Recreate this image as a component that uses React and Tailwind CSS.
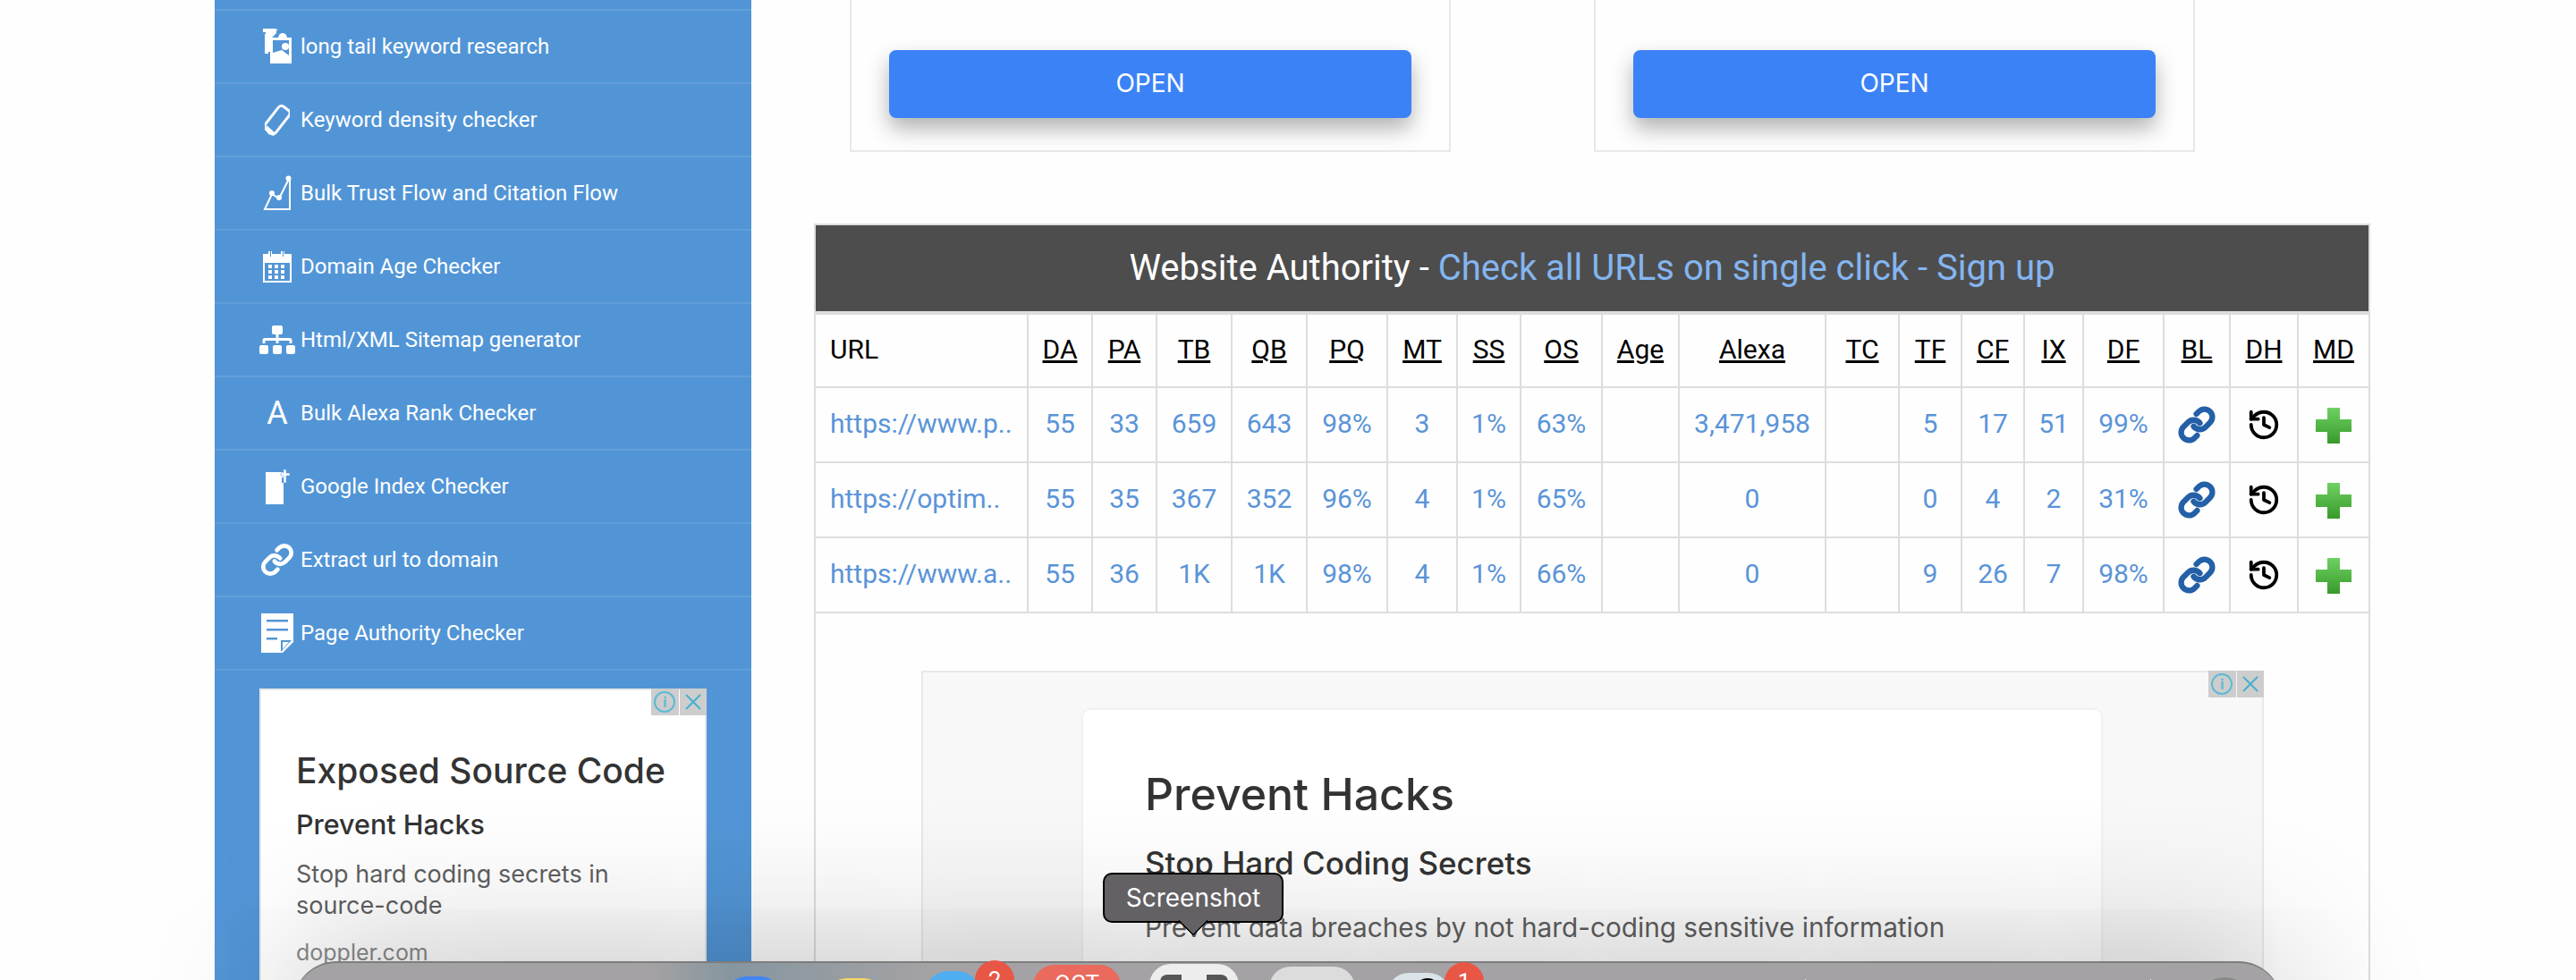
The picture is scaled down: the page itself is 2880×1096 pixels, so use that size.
import { History, Link } from "lucide-react";
import { FaSitemap } from "react-icons/fa";

const roboto = "font-['Roboto',sans-serif]";
const adFont = "font-['Inter','Liberation_Sans',sans-serif]";

function ImagesIcon() {
  return (
    <svg width="32" height="40" viewBox="0 0 32 40" fill="white">
      <path d="M0 0h14l3 2h-2v3l-6 6v15H3V4H0z" />
      <path d="M2 6v22h4V6z" />
      <rect x="8" y="10" width="24" height="29" />
      <path d="M11 29l7-4 11 6v5H11z" fill="white" />
      <path d="M11 13h18v17l-8-6-10 3z" fill="#5295d6" />
      <circle cx="25" cy="20" r="4" fill="white" />
      <path d="M17 11c0-8 10-8 10 0z" fill="white" />
    </svg>
  );
}

function TagIcon() {
  return (
    <svg width="28" height="38" viewBox="0 0 28 38">
      <rect x="6.5" y="3" width="15" height="32" rx="4" transform="rotate(38 14 19)" fill="none" stroke="white" strokeWidth="3" />
      <path d="M2 25l10 9-2 3-6-2-3-5z" fill="white" />
    </svg>
  );
}

function ChartIcon() {
  return (
    <svg width="32" height="40" viewBox="0 0 32 40" fill="none" stroke="white">
      <path d="M30 5v33H2L10 21l8 5L29 4" strokeWidth="2" />
      <circle cx="28.5" cy="3.5" r="3" fill="white" stroke="none" />
      <circle cx="10" cy="20" r="3" fill="white" stroke="none" />
      <circle cx="18" cy="25" r="3" fill="white" stroke="none" />
    </svg>
  );
}

function CalendarIcon() {
  return (
    <svg width="32" height="36" viewBox="0 0 32 36" fill="white">
      <path d="M0 4h6V1h2v6h1V1h1v3h10V1h2v6h1V1h1v3h8v32H0zM2 14v20h28V14z" />
      {[16, 22, 28].map((y) =>
        [6, 13, 20].map((x) => <rect key={`${x}-${y}`} x={x} y={y} width="4" height="4" />)
      )}
    </svg>
  );
}

function FilePlusIcon() {
  return (
    <svg width="30" height="40" viewBox="0 0 30 40" fill="white">
      <path d="M2 4h20v6h-2v6h2v24H2z" />
      <path d="M22 1h3v4h4v3h-4v8h-3V8h-3V5h3z" stroke="#5295d6" strokeWidth="0.5" />
    </svg>
  );
}

function PageIcon() {
  return (
    <svg width="36" height="44" viewBox="0 0 36 44" fill="white">
      <path d="M0 0h36v32L24 44H0z" />
      <path d="M6 7h24v2.500H6zM6 17h24v2.500H6zM6 27h12v2.500H6z" fill="#5295d6" />
      <path d="M22 30h12L22 43z" fill="#5295d6" />
      <path d="M24 32h7l-7 8z" fill="white" />
    </svg>
  );
}

const menu = [
  { label: "long tail keyword research", icon: <ImagesIcon /> },
  { label: "Keyword density checker", icon: <TagIcon /> },
  { label: "Bulk Trust Flow and Citation Flow", icon: <ChartIcon /> },
  { label: "Domain Age Checker", icon: <CalendarIcon /> },
  { label: "Html/XML Sitemap generator", icon: <FaSitemap size={40} color="white" /> },
  { label: "Bulk Alexa Rank Checker", icon: <span className="text-[36px] leading-none text-white">A</span> },
  { label: "Google Index Checker", icon: <FilePlusIcon /> },
  { label: "Extract url to domain", icon: <Link size={38} color="white" strokeWidth={3} /> },
  { label: "Page Authority Checker", icon: <PageIcon /> },
];

const columns = [
  { label: "URL", w: "w-[237px]" },
  { label: "DA", w: "w-[72px]" },
  { label: "PA", w: "w-[72px]" },
  { label: "TB", w: "w-[84px]" },
  { label: "QB", w: "w-[84px]" },
  { label: "PQ", w: "w-[90px]" },
  { label: "MT", w: "w-[78px]" },
  { label: "SS", w: "w-[71px]" },
  { label: "OS", w: "w-[91px]" },
  { label: "Age", w: "w-[86px]" },
  { label: "Alexa", w: "w-[164px]" },
  { label: "TC", w: "w-[82px]" },
  { label: "TF", w: "w-[70px]" },
  { label: "CF", w: "w-[70px]" },
  { label: "IX", w: "w-[66px]" },
  { label: "DF", w: "w-[90px]" },
  { label: "BL", w: "w-[74px]" },
  { label: "DH", w: "w-[76px]" },
  { label: "MD", w: "w-[79px]" },
];

const rows = [
  ["https://www.p..", "55", "33", "659", "643", "98%", "3", "1%", "63%", "", "3,471,958", "", "5", "17", "51", "99%"],
  ["https://optim..", "55", "35", "367", "352", "96%", "4", "1%", "65%", "", "0", "", "0", "4", "2", "31%"],
  ["https://www.a..", "55", "36", "1K", "1K", "98%", "4", "1%", "66%", "", "0", "", "9", "26", "7", "98%"],
];

function OpenCard() {
  return (
    <div className="flex h-[170px] w-[672px] items-end justify-center border-x-2 border-b-2 border-[#e8e8e8] pb-[36px]">
      <button className={`h-[76px] w-[584px] rounded-lg bg-[#3b82f6] pb-[3px] text-[28px] text-white shadow-[0_12px_24px_rgba(0,0,0,0.3)] ${adFont}`}>
        OPEN
      </button>
    </div>
  );
}

function AdChoices() {
  return (
    <div className="absolute -right-[2px] -top-[2px] flex h-[30px] w-[62px] gap-[1px]">
      <div className="flex flex-1 items-center justify-center bg-[#cdcdcd]">
        <span className="flex h-[24px] w-[24px] items-center justify-center rounded-full border-2 border-[#5bbad5] text-[15px] font-bold leading-none text-[#5bbad5]">
          i
        </span>
      </div>
      <div className="flex flex-1 items-center justify-center bg-[#cdcdcd]">
        <svg width="20" height="20" viewBox="0 0 20 20" stroke="#45b0cf" strokeWidth="2">
          <path d="M2 2l16 16M18 2L2 18" />
        </svg>
      </div>
    </div>
  );
}

function PlusIcon({ id }) {
  return (
    <svg width="40" height="40" viewBox="0 0 40 40" className="mx-auto mt-[1px] block">
      <defs>
        <linearGradient id={id} x1="0" y1="0" x2="0" y2="1">
          <stop offset="0" stopColor="#6fd163" />
          <stop offset="1" stopColor="#379a2a" />
        </linearGradient>
      </defs>
      <path d="M13 0h14v13h13v14H27v13H13V27H0V13h13z" fill={`url(#${id})`} />
    </svg>
  );
}

function Badge({ children }) {
  return (
    <div className="absolute -right-[38px] -top-[12px] h-[44px] w-[44px] rounded-full bg-[#e85646] text-center text-[26px] leading-[44px] text-white">
      {children}
    </div>
  );
}

export default function App() {
  return (
    <div className={`relative flex h-[1096px] w-[2880px] overflow-hidden bg-[#fefefe] ${roboto}`}>
      <aside className="ml-[240px] h-full w-[600px] shrink-0 bg-[#5295d6]">
        <div className="h-[12px] border-b-2 border-[#619fdb]" />
        {menu.map((item) => (
          <div key={item.label} className="flex h-[82px] items-center gap-[6px] border-b-2 border-[#619fdb] pl-[50px]">
            <div className="flex w-[40px] items-center justify-center">{item.icon}</div>
            <span className="text-[24px] font-normal text-white">{item.label}</span>
          </div>
        ))}
        <div className={`relative ml-[50px] mt-[20px] h-[400px] w-[500px] border-x-2 border-t-2 border-[#e8e8e8] bg-white pl-[39px] ${adFont}`}>
          <AdChoices />
          <p className="mt-[66px] text-[39px] font-medium leading-[48px] text-[#333]">Exposed Source Code</p>
          <p className="mt-[17px] text-[30.500px] font-medium leading-[38px] text-[#333]">Prevent Hacks</p>
          <p className="mt-[19px] text-[27px] leading-[35px] text-[#5f5f5f]">
            Stop hard coding secrets in
            <br />
            source-code
          </p>
          <p className="mt-[18px] text-[25px] leading-[35px] text-[#8a8a8a]">doppler.com</p>
        </div>
      </aside>

      <main className="ml-[70px] w-[1740px]">
        <div className="flex gap-[160px] pl-[40px]">
          <OpenCard />
          <OpenCard />
        </div>

        <section className="mt-[80px] h-[900px] border-x-2 border-t-2 border-[#dddddd]">
          <h2 className="flex h-[100px] items-center justify-center border-b-4 border-[#dddddd] bg-[#4d4d4d] text-[40px] font-normal text-white">
            Website Authority -&nbsp;<span className="text-[#84b5f0]">Check all URLs on single click - Sign up</span>
          </h2>

          <table className="w-[1736px] table-fixed border-collapse text-[30px] font-normal">
            <colgroup>
              {columns.map((col) => (
                <col key={col.label} className={col.w} />
              ))}
            </colgroup>
            <thead>
              <tr className="h-[81px]">
                {columns.map((col, i) => (
                  <th
                    key={col.label}
                    className={`border-2 border-t-0 border-[#dddddd] pb-[3px] font-normal text-black first:border-l-0 last:border-r-0 ${i === 0 ? "pl-[16px] text-left" : "text-center underline"}`}
                  >
                    {col.label}
                  </th>
                ))}
              </tr>
            </thead>
            <tbody>
              {rows.map((row, r) => (
                <tr key={row[0]} className="h-[84px]">
                  {row.map((cell, i) => (
                    <td
                      key={i}
                      className={`overflow-hidden whitespace-nowrap border-2 border-[#dddddd] pb-[3px] text-[#5a94d8] first:border-l-0 ${i === 0 ? "pl-[16px] text-left" : "text-center"}`}
                    >
                      {cell}
                    </td>
                  ))}
                  <td className="border-2 border-[#dddddd]">
                    <Link size={42} color="#2460a7" strokeWidth={3.6} className="mx-auto" />
                  </td>
                  <td className="border-2 border-[#dddddd]">
                    <History size={38} color="black" strokeWidth={2.4} className="mx-auto" />
                  </td>
                  <td className="border-2 border-r-0 border-[#dddddd]">
                    <PlusIcon id={`plus-${r}`} />
                  </td>
                </tr>
              ))}
            </tbody>
          </table>

          <div className={`relative ml-[118px] mt-[64px] h-[400px] w-[1501px] border-2 border-[#e8e8e8] bg-[#f8f8f8] pl-[179px] pt-[42px] ${adFont}`}>
            <AdChoices />
            <div className="h-[400px] w-[1138px] rounded-lg bg-white pl-[69px] pt-[62px] shadow-[0_0_4px_rgba(0,0,0,0.08)]">
              <p className="text-[50px] font-medium leading-[64px] text-[#333]">Prevent Hacks</p>
              <p className="mt-[22px] text-[35px] font-medium leading-[46px] text-[#333]">Stop Hard Coding Secrets</p>
              <p className="mt-[28px] text-[29.750px] leading-[42px] text-[#5f5f5f]">Prevent data breaches by not hard-coding sensitive information</p>
            </div>
          </div>
        </section>
      </main>

      {/* mac dock over the bottom of the page */}
      <div className="absolute left-[328px] top-[1075px] flex h-[120px] w-[2223px] items-start rounded-t-[48px] border-t-2 border-[#7d7d7d] bg-[linear-gradient(90deg,#a4a2a4_18%,#86969f_22%,#a4a2a4_32%)] pl-[483px] shadow-[0_0_170px_rgba(0,0,0,0.3)]">
        <div className="mt-[15px] h-[60px] w-[63px] rounded-t-[24px] bg-[#4285f4]" />
        <div className="ml-[49px] mt-[17px] h-[60px] w-[66px] rounded-t-[24px] bg-[#f5d866]" />
        <div className="relative ml-[45px] mt-[9px] h-[60px] w-[62px] rounded-t-[26px] bg-[#4eaef0]">
          <Badge>2</Badge>
        </div>
        <div className="ml-[59px] mt-[2px] h-[60px] w-[98px] rounded-t-[24px] bg-[#ea6a5e] pt-[8px] text-center text-[26px] leading-none text-white">
          OCT
        </div>
        <div className="ml-[32px] mt-[1px] flex h-[60px] w-[100px] justify-center gap-[28px] rounded-t-[24px] bg-[#ededed] pt-[12px]">
          <div className="h-[14px] w-[24px] rounded-tl-[8px] border-l-[6px] border-t-[6px] border-[#555]" />
          <div className="h-[14px] w-[24px] rounded-tr-[8px] border-r-[6px] border-t-[6px] border-[#555]" />
        </div>
        <div className="ml-[34px] mt-[4px] h-[60px] w-[96px] rounded-t-[24px] bg-[#dcdcdc]" />
        <div className="relative ml-[36px] mt-[11px] h-[60px] w-[70px] rounded-t-[24px] bg-[#d9e3e8] pl-[30px] pt-[6px]">
          <div className="h-[30px] w-[30px] rounded-full bg-black" />
          <Badge>1</Badge>
        </div>
        <div className="ml-[397px] mt-[18px] h-[30px] w-[1px] bg-[#e5e5e5]" />
        <div className="ml-[385px] mt-[18px] h-[30px] w-[1px] bg-[#e5e5e5]" />
        <div className="ml-[49px] mt-[16px] h-[60px] w-[66px] rounded-t-full bg-[#888888]" />
      </div>

      {/* dock tooltip */}
      <div className={`absolute left-[1233px] top-[976px] flex h-[56px] w-[202px] items-center justify-center rounded-[10px] border-2 border-black bg-[#636164] text-[28px] text-white ${adFont}`}>
        Screenshot
        <div className="absolute left-1/2 top-[40px] h-[24px] w-[24px] -translate-x-1/2 rotate-45 rounded-[2px] border-b-2 border-r-2 border-black bg-[#636164]" />
      </div>
    </div>
  );
}
